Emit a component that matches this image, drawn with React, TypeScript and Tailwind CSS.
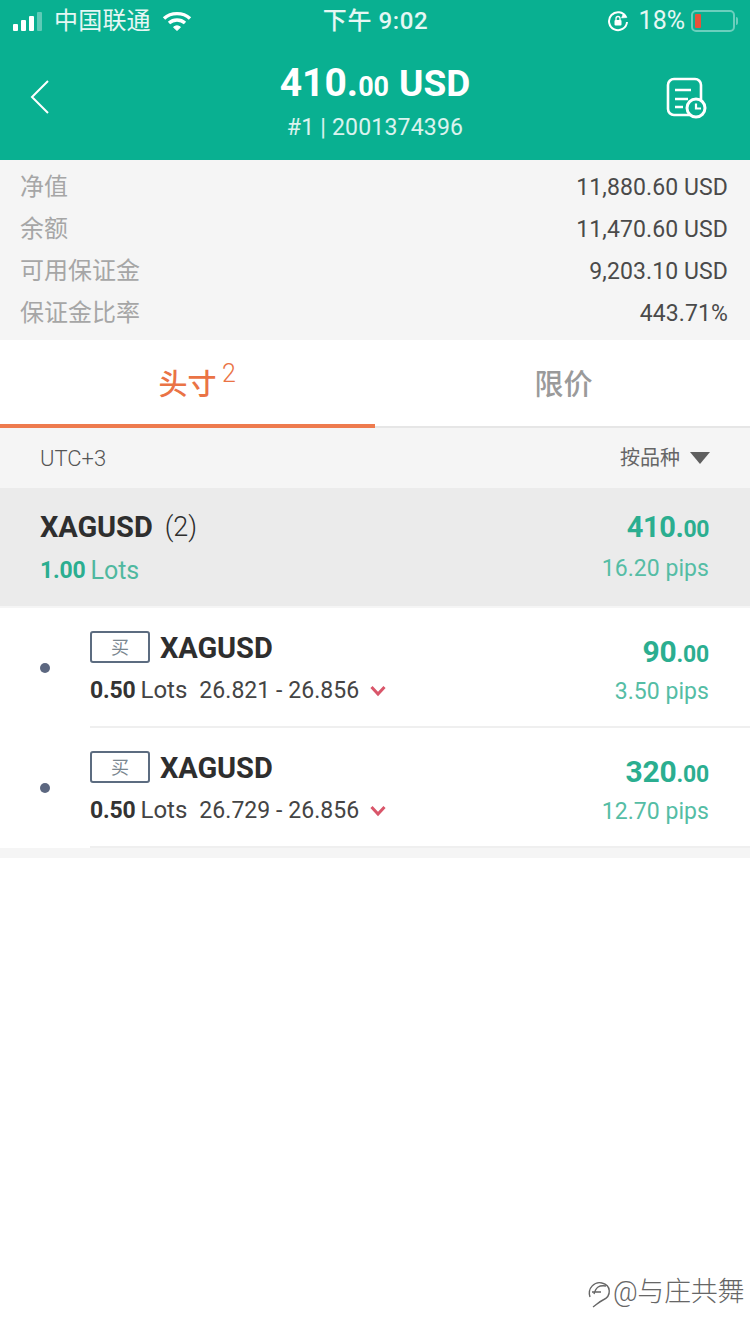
const font = { fontFamily: '"Roboto", "Noto Sans CJK SC", sans-serif' };

function SummaryRow({ label, value }: { label: string; value: string }) {
  return (
    <div className="flex h-[42px] items-center justify-between">
      <span className="text-[24px] text-[#a6a6a6]">{label}</span>
      <span className="pt-[3px] text-[23px] tracking-[0.1px] text-[#4a4a4a]">{value}</span>
    </div>
  );
}

function PositionRow({
  price,
  profit,
  pips,
}: {
  price: string;
  profit: string;
  pips: string;
}) {
  return (
    <div className="flex h-[120px] bg-white">
      <div className="flex w-[90px] shrink-0 items-center pl-[40px]">
        <div className="h-[10px] w-[10px] rounded-full bg-[#5c6780]" />
      </div>
      <div className="flex flex-1 justify-between border-b-2 border-[#efefef] pr-[41px] pt-[22px]">
        <div>
          <div className="flex h-[34px] items-center">
            <div className="flex h-[32px] w-[60px] items-center justify-center rounded-[3px] border-2 border-[#5c6c80] text-[18px] text-[#7b8790]">
              买
            </div>
            <span className="ml-[10px] pt-[4px] text-[29px] font-bold tracking-[-0.1px] text-[#2e2e2e]">XAGUSD</span>
          </div>
          <div className="mt-[10px] flex h-[34px] items-center text-[#333333]">
            <span className="text-[23px] font-bold tracking-[-0.2px]">0.50</span>
            <span className="ml-[5px] pb-[3px] text-[24px] text-[#444444]">Lots</span>
            <span className="ml-[12px] text-[23px] tracking-[0.05px] text-[#444444]">{price}</span>
            <svg className="ml-[11px]" width="16" height="12" viewBox="0 0 16 12" fill="none">
              <path d="M1.5 2 L8 9 L14.5 2" stroke="#d9566a" strokeWidth="3" />
            </svg>
          </div>
        </div>
        <div className="flex flex-col items-end">
          <div className="mt-[-1px] flex h-[36px] items-baseline font-bold text-[#2bae90]">
            <span className="text-[30px] tracking-[-0.2px]">{profit}</span>
            <span className="text-[23px] tracking-[-0.2px]">.00</span>
          </div>
          <div className="mt-[10px] text-[23px] tracking-[0.05px] text-[#55bda5]">{pips}</div>
        </div>
      </div>
    </div>
  );
}

export default function App() {
  return (
    <div className="relative h-[1334px] w-[750px] overflow-hidden bg-white" style={font}>
      <header className="h-[160px] bg-[#09b091] text-white">
        <div className="flex h-[42px] items-center justify-between pl-[13px] pr-[12px]">
          <div className="flex flex-1 items-center">
            <div className="flex items-end gap-[3px]">
              <div className="h-[7px] w-[5px] rounded-[1px] bg-white" />
              <div className="h-[11px] w-[5px] rounded-[1px] bg-white" />
              <div className="h-[15px] w-[5px] rounded-[1px] bg-white" />
              <div className="h-[19px] w-[5px] rounded-[1px] bg-white/35" />
            </div>
            <span className="ml-[12px] text-[24px] tracking-[0.2px] text-white/90">中国联通</span>
            <svg className="ml-[10px]" width="32" height="22" viewBox="0 0 32 22" fill="none" stroke="#fff" strokeWidth="3.4">
              <path d="M3 8.5 C10 2 22 2 29 8.5" />
              <path d="M8 13 C12.5 9 19.5 9 24 13" />
              <path d="M12.5 17.2 L16 20.5 L19.5 17.2 C17.5 15.4 14.5 15.4 12.5 17.2 Z" fill="#fff" strokeWidth="1" />
            </svg>
          </div>
          <span className="text-[24px] font-medium tracking-[0.6px] text-white/90">下午 9:02</span>
          <div className="flex flex-1 items-center justify-end">
            <svg width="22" height="22" viewBox="0 0 22 22" fill="none" stroke="#fff" strokeWidth="2">
              <path d="M19 7 A9 9 0 1 0 20 12" />
              <path d="M16.5 3 L20 7.5 L14.5 8 Z" fill="#fff" strokeWidth="0.5" />
              <rect x="7.5" y="10" width="7" height="5.5" rx="1" fill="#fff" stroke="none" />
              <path d="M9 10 V8.5 A2 2 0 0 1 13 8.5 V10" strokeWidth="1.3" />
            </svg>
            <span className="ml-[10px] text-[25px] text-white/90">18%</span>
            <div className="relative ml-[6px] flex h-[22px] w-[44px] items-center rounded-[5px] border-2 border-white/40 pl-[2px]">
              <div className="h-[14px] w-[6px] rounded-[1px] bg-[#e8523a]" />
            </div>
            <div className="ml-[1px] h-[8px] w-[2px] rounded-r-sm bg-white/40" />
          </div>
        </div>
        <div className="flex h-[118px] items-start px-[28px]">
          <div className="flex-1">
            <svg className="mt-[37px]" width="22" height="36" viewBox="0 0 22 36" fill="none" stroke="#fff" strokeWidth="2">
              <path d="M20 2 L4 18 L20 34" />
            </svg>
          </div>
          <div className="flex flex-col items-center">
            <div className="mt-[12px] flex h-[48px] items-baseline font-bold">
              <span className="text-[39px]">410.</span>
              <span className="text-[27px]">00</span>
              <span className="ml-[10px] text-[37px]">USD</span>
            </div>
            <div className="mt-[9px] text-[23px] tracking-[0.2px] text-white/85">#1 | 2001374396</div>
          </div>
          <div className="flex flex-1 justify-end">
            <svg className="mr-[13px] mt-[35px]" width="44" height="44" viewBox="0 0 44 44" fill="none" stroke="#fff" strokeWidth="2.6">
              <rect x="3" y="2" width="33" height="36" rx="6" />
              <path d="M10 13 H26 M10 22 H23 M10 30 H18" strokeWidth="2.4" />
              <circle cx="31" cy="31" r="9" strokeWidth="3" fill="#09b091" />
              <path d="M31 26.5 V31.5 H36" strokeWidth="2.2" />
            </svg>
          </div>
        </div>
      </header>

      <section className="h-[180px] bg-[#f5f5f5] pl-[20px] pr-[22px] pt-[6px]">
        <SummaryRow label="净值" value="11,880.60 USD" />
        <SummaryRow label="余额" value="11,470.60 USD" />
        <SummaryRow label="可用保证金" value="9,203.10 USD" />
        <SummaryRow label="保证金比率" value="443.71%" />
      </section>

      <nav className="flex h-[88px] bg-white">
        <div className="relative flex w-[375px] items-center justify-center border-b-4 border-[#ee7b4e] pt-[7px] text-[#ea7345]">
          <span className="text-[29px] font-medium">头寸</span>
          <span className="absolute left-[222px] top-[15px] text-[25px] font-light">2</span>
        </div>
        <div className="flex flex-1 items-center justify-center border-b-2 border-[#e6e6e6] pl-[2px] pt-[5px]">
          <span className="text-[29px] font-medium text-[#9a9a9a]">限价</span>
        </div>
      </nav>

      <div className="flex h-[60px] items-center justify-between bg-[#f5f5f5] pl-[40px] pr-[40px]">
        <span className="text-[22px] font-light text-[#555555]">UTC+3</span>
        <div className="flex items-center">
          <span className="text-[20px] text-[#666666]">按品种</span>
          <svg className="ml-[10px]" width="20" height="14" viewBox="0 0 20 14">
            <path d="M0 1 H20 L10 13 Z" fill="#5f5f5f" />
          </svg>
        </div>
      </div>

      <div className="flex h-[118px] justify-between bg-[#ebebeb] pl-[40px] pr-[41px] pt-[20px]">
        <div>
          <div className="flex h-[38px] items-center text-[#2e2e2e]">
            <span className="pt-[2px] text-[29px] font-bold tracking-[-0.1px]">XAGUSD</span>
            <span className="ml-[12px] text-[27px] font-light">(2)</span>
          </div>
          <div className="mt-[7px] flex h-[36px] items-center">
            <span className="text-[23px] font-bold tracking-[-0.2px] text-[#2bae90]">1.00</span>
            <span className="ml-[5px] text-[25px] text-[#4fb89f]">Lots</span>
          </div>
        </div>
        <div className="flex flex-col items-end">
          <div className="mt-[-2px] flex h-[38px] items-baseline font-bold text-[#2bae90]">
            <span className="text-[29px] tracking-[-0.4px]">410.</span>
            <span className="text-[23px] tracking-[-0.4px]">00</span>
          </div>
          <div className="mt-[8px] text-[23px] tracking-[0.05px] text-[#55bda5]">16.20 pips</div>
        </div>
      </div>

      <div className="h-[2px] bg-[#f5f5f5]" />

      <PositionRow price="26.821 - 26.856" profit="90" pips="3.50 pips" />
      <PositionRow price="26.729 - 26.856" profit="320" pips="12.70 pips" />

      <div className="h-[10px] bg-[#f5f5f5]" />

      {/* watermark sits over the empty page */}
      <div className="absolute left-[587px] top-[1272px] flex items-center text-[#666666]">
        <svg width="26" height="32" viewBox="0 0 26 32" fill="none" stroke="#666666" strokeWidth="1.4">
          <path d="M3 21 C0 12 8 5 15 7 C24 9 25 20 16 24 C12 26 9 29 6 31" />
          <path d="M7 18 C9 11 12 9 19 10 M5 16 H14" />
        </svg>
        <span className="text-[27px] font-light tracking-[-0.3px]">@与庄共舞</span>
      </div>
    </div>
  );
}
